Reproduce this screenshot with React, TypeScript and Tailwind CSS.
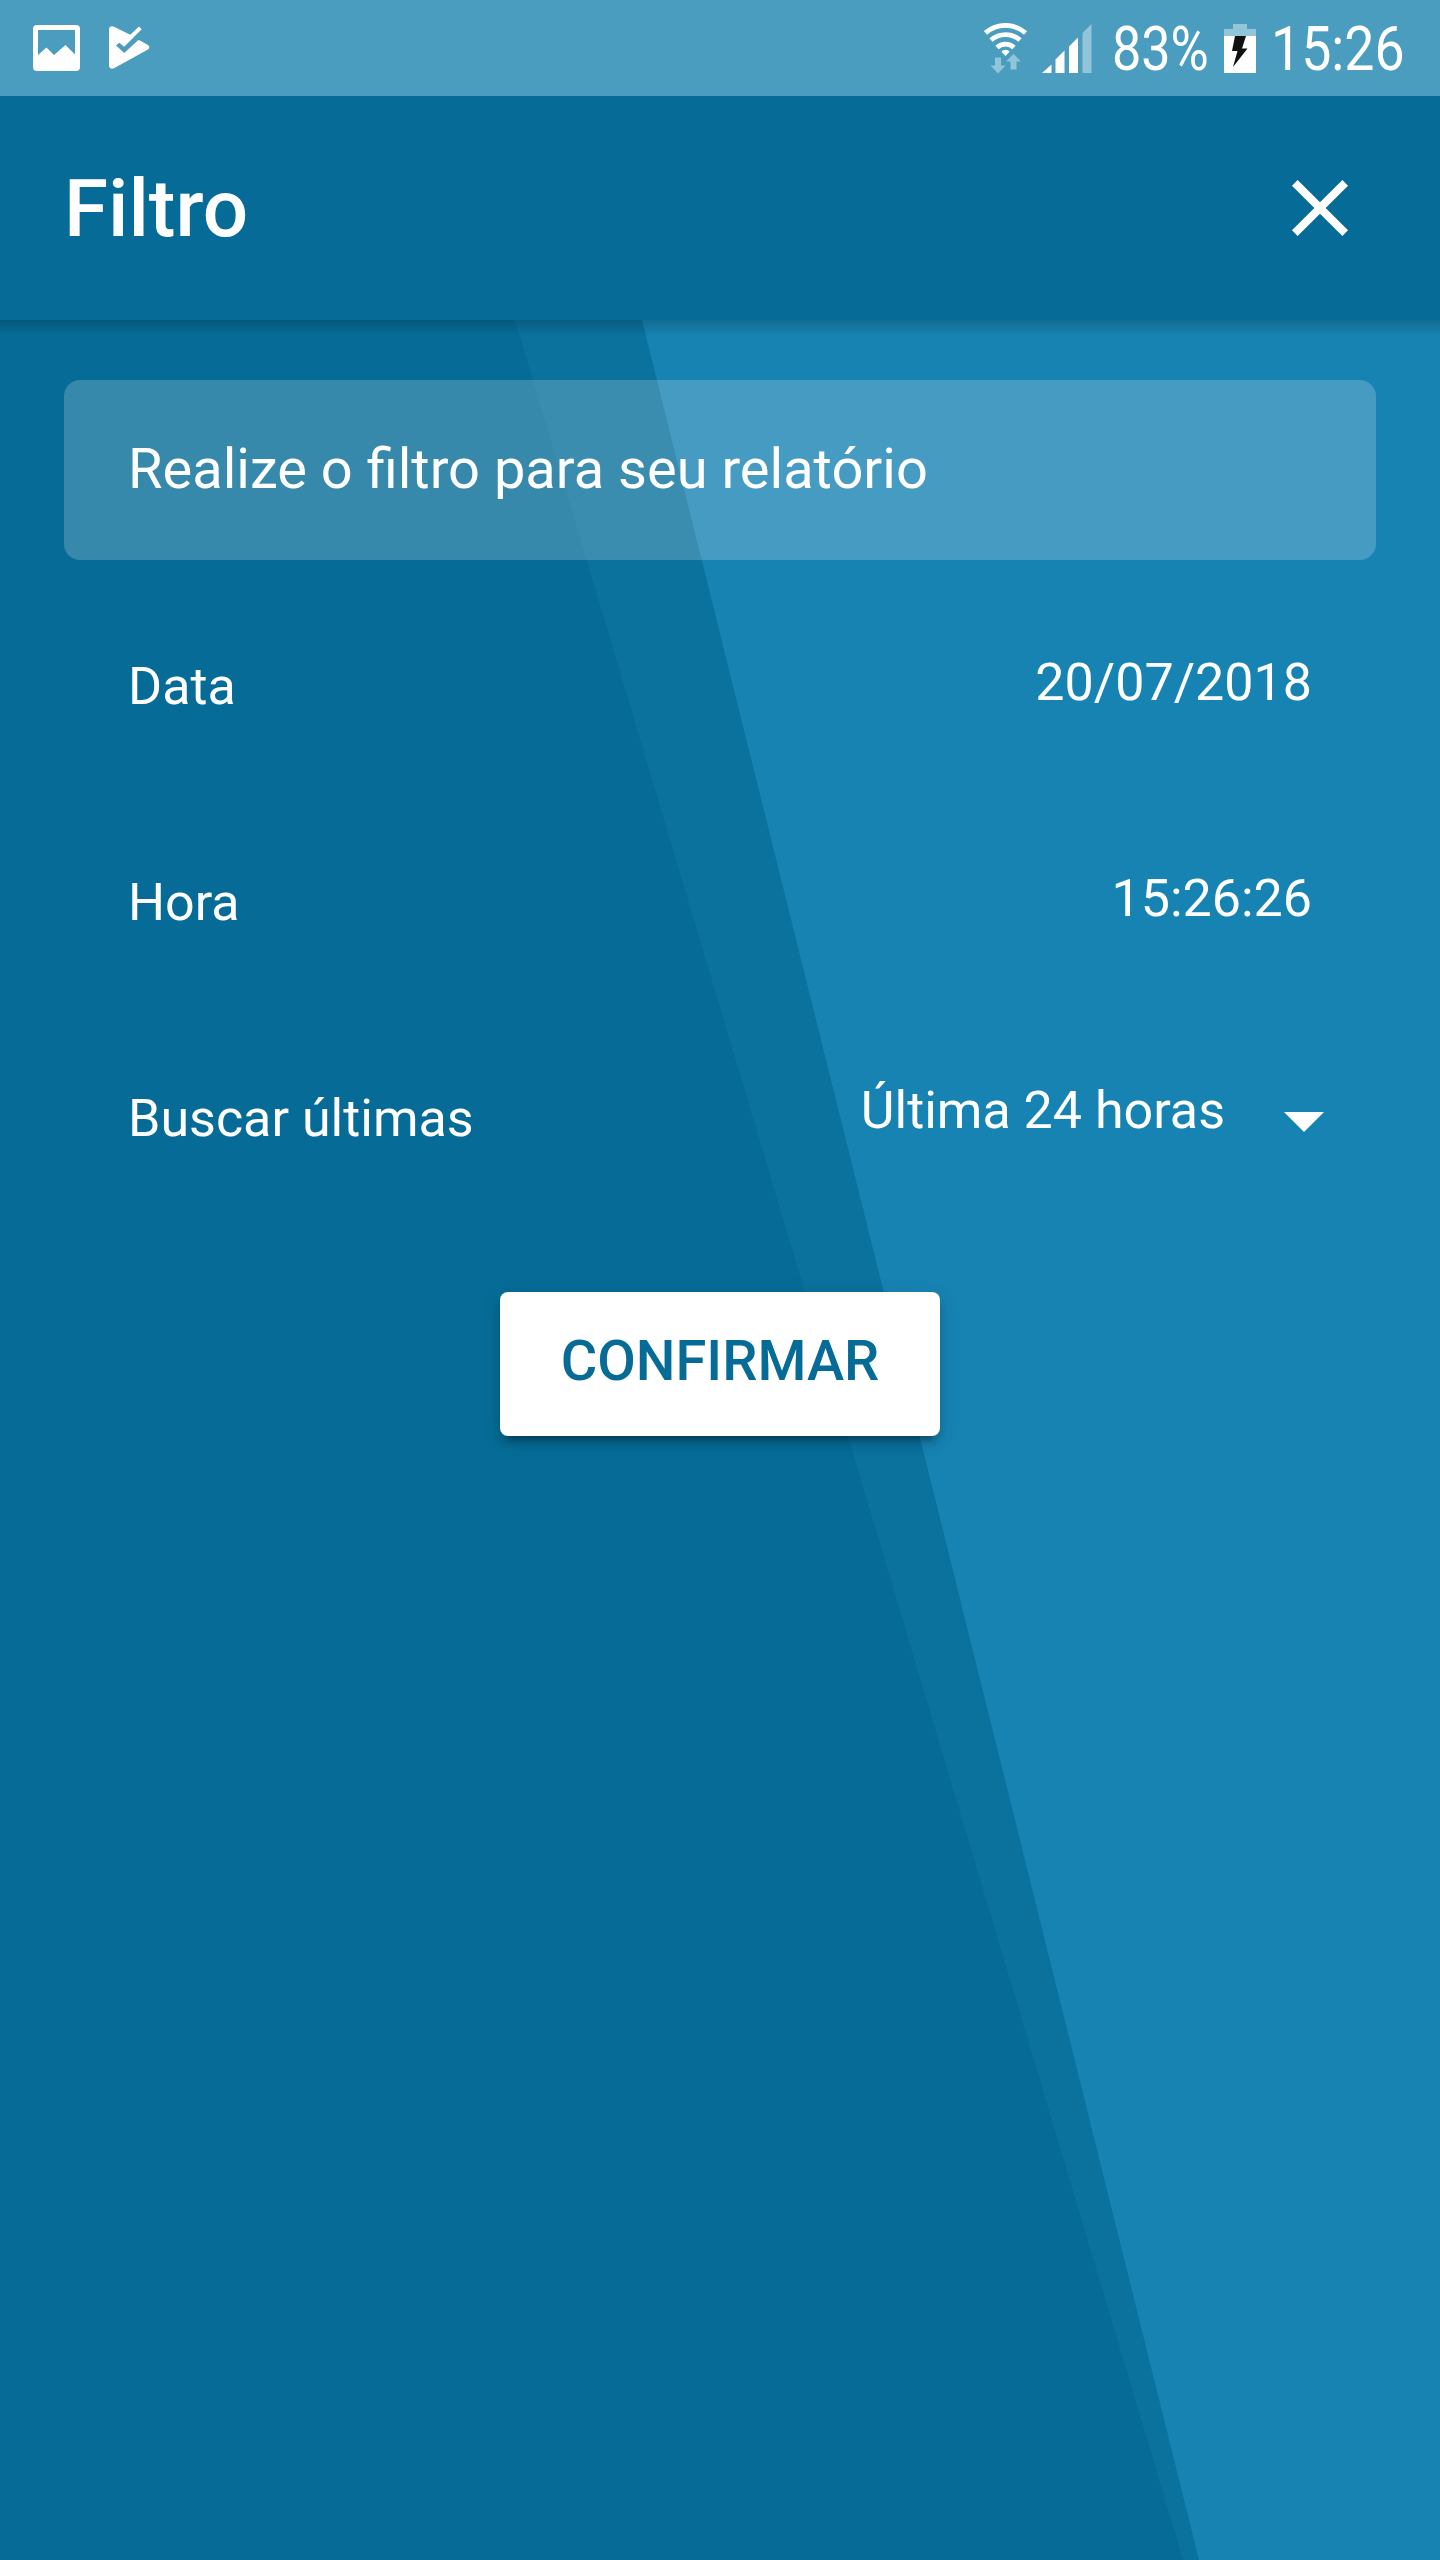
import React from 'react'

const rows = [
  { label: 'Data', value: '20/07/2018' },
  { label: 'Hora', value: '15:26:26' },
]

function Backdrop() {
  return (
    <svg className="absolute inset-0 -z-10 h-full w-full" viewBox="0 0 1440 2560" preserveAspectRatio="none">
      <rect width="1440" height="2560" fill="#066c97" />
      <polygon points="515,320 1440,320 1440,2560 1183,2560" fill="#0b719d" />
      <polygon points="642,320 1440,320 1440,2560 1199,2560" fill="#1783b3" />
    </svg>
  )
}

function PictureIcon() {
  return (
    <svg className="h-[46px] w-[47px]" viewBox="0 0 47 46" fill="#fff">
      <path
        fillRule="evenodd"
        d="M4 0h39a4 4 0 0 1 4 4v38a4 4 0 0 1-4 4H4a4 4 0 0 1-4-4V4a4 4 0 0 1 4-4zM5 5v25l8.500-7.500 7.500 7.500 11.500-10L42 29.500V5z"
      />
    </svg>
  )
}

function PlayCheckIcon() {
  return (
    <svg className="h-[43px] w-[41px]" viewBox="0 0 41 43" fill="#fff">
      <path d="M0 3.500C0 .6 2.600-.6 5 .8L21.300 8.700 30 .6l2.700 2.700L15.200 20.700l-5-4L7 19.500 15.200 27 28 15.200c1-1.100 1.800-1.200 3-.6l7.500 4.200c2.400 1.300 2.400 3.700 0 5L5 42.300C2.600 43.500 0 42.200 0 39.500z" />
    </svg>
  )
}

function WifiIcon() {
  return (
    <svg className="h-[51px] w-[43px]" viewBox="0 0 43 51">
      <g fill="none" stroke="#fff" strokeWidth="4.800">
        <path d="M1.500 10a30 30 0 0 1 40 0" />
        <path d="M7 17a22 22 0 0 1 29 0" />
        <path d="M13 24.500a12.500 12.500 0 0 1 17 0" />
      </g>
      <path d="M21.500 33l-4-4.200c1.200-2.800 6.800-2.800 8 0z" fill="#fff" />
      <g fill="#92c5d9">
        <path d="M11 34.500h6v8h4.500L14 50.500l-7.500-8H11z" />
        <path d="M26.500 46.500h6v-8H37L29.500 31 22 38.500h4.500z" />
      </g>
    </svg>
  )
}

function SignalIcon() {
  return (
    <svg className="h-[49px] w-[50px]" viewBox="0 0 50 49" fill="#fff">
      <path d="M0 49l9.500-8.500V49z" />
      <path d="M13.500 35.500l9-9V49h-9z" />
      <path d="M27 22.500l9-9V49h-9z" />
      <path d="M40.500 9L49.500 0v49h-9z" fill="#92c5d9" />
    </svg>
  )
}

function BatteryIcon() {
  return (
    <svg className="h-[49px] w-8" viewBox="0 0 32 49">
      <path d="M9 0h14v5h9v7H0V5h9z" fill="#92c5d9" />
      <path d="M0 12h32v37H0z" fill="#fff" />
      <path d="M11 12h11l-4 12.500h5.500L9 43l4.500-16H8z" fill="#111" />
    </svg>
  )
}

function StatusBar() {
  return (
    <div className="flex h-24 items-center justify-between bg-[#4a9dbf] text-[61px] leading-none">
      <div className="flex items-center pb-px pl-[33px]">
        <PictureIcon />
        <span className="w-[29px]" />
        <PlayCheckIcon />
      </div>
      <div className="flex items-center pr-[3px]">
        <WifiIcon />
        <span className="w-[15px]" />
        <SignalIcon />
        <span className="ml-[20px] w-[97px] origin-left scale-x-[0.855] pt-0.5 whitespace-nowrap">83%</span>
        <span className="ml-[15px]">
          <BatteryIcon />
        </span>
        <span className="ml-[15px] w-[166px] origin-left scale-x-[0.88] pt-0.5 whitespace-nowrap">15:26</span>
      </div>
    </div>
  )
}

export default function App() {
  return (
    <div className="relative isolate h-[2560px] w-[1440px] overflow-hidden font-['Roboto',sans-serif] text-white">
      <Backdrop />
      <StatusBar />

      <header className="flex h-56 items-center justify-between bg-[#066c97] pr-[72px] pl-16">
        <h1 className="pt-0.5 text-[80px] leading-none font-medium">Filtro</h1>
        <button aria-label="Fechar">
          <svg className="size-24" viewBox="0 0 24 24" fill="#fff">
            <path d="M19 6.410L17.590 5 12 10.590 6.410 5 5 6.410 10.590 12 5 17.590 6.410 19 12 13.410 17.590 19 19 17.590 13.410 12z" />
          </svg>
        </button>
      </header>
      {/* header drop shadow */}
      <div className="h-4 bg-gradient-to-b from-black/18 to-transparent" />

      <main className="px-16 pt-11">
        <div className="flex h-[180px] items-center rounded-2xl bg-white/20 px-16 pb-0.5 text-[56px] leading-none">
          Realize o filtro para seu relatório
        </div>

        <div className="pt-[19px] text-[52px] leading-none">
          {rows.map((row) => (
            <div key={row.label} className="flex h-[216px] items-center justify-between px-16">
              <span>{row.label}</span>
              <span className="pb-2">{row.value}</span>
            </div>
          ))}
          <div className="flex h-[216px] items-center justify-between pr-[52px] pl-16">
            <span>Buscar últimas</span>
            <div className="flex items-center">
              <span className="pb-4">Última 24 horas</span>
              <svg className="mt-1.5 ml-[59px] h-5 w-10" viewBox="0 0 40 20" fill="#fff">
                <path d="M0 0h40L20 20z" />
              </svg>
            </div>
          </div>
        </div>

        <button className="mx-auto mt-[65px] flex h-36 w-[440px] items-center justify-center rounded-lg bg-white pb-1.5 text-[56px] leading-none font-medium text-[#066c97] shadow-[0_8px_8px_0_rgba(0,0,0,0.14),0_12px_4px_-8px_rgba(0,0,0,0.2),0_4px_20px_0_rgba(0,0,0,0.12)]">
          CONFIRMAR
        </button>
      </main>
    </div>
  )
}
